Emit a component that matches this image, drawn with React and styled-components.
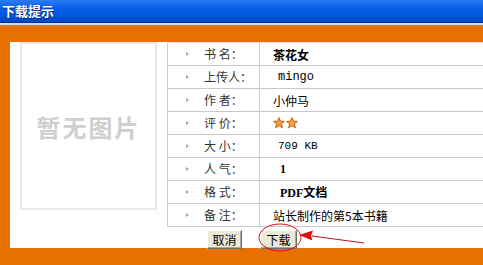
import React from 'react';
import styled, { createGlobalStyle } from 'styled-components';

const GlobalStyle = createGlobalStyle`
  html, body {
    margin: 0;
    padding: 0;
    background: #e87000;
  }
  body {
    font-family: "Noto Sans CJK SC", "Liberation Sans", sans-serif;
    font-size: 12px;
    color: #000;
  }
`;

const rows = [
  { label: '书 名：', value: '茶花女', kind: 'bold' },
  { label: '上传人：', value: 'mingo', kind: 'mono' },
  { label: '作 者：', value: '小仲马' },
  { label: '评 价：', stars: 2 },
  { label: '大 小：', value: '709 KB', kind: 'size' },
  { label: '人 气：', value: '1', kind: 'num' },
  { label: '格 式：', value: 'PDF文档', kind: 'num' },
  { label: '备 注：', value: '站长制作的第5本书籍' },
];

const Page = styled.div`
  position: relative;
  width: 483px;
  height: 265px;
  overflow: hidden;
  background: #e87000;
`;

const TitleBar = styled.div`
  height: 22px;
  background: linear-gradient(#2b7cf2 0%, #0a5fe8 35%, #0055dd 75%, #0044c4 100%);
  border-bottom: 1px solid #00309a;
  color: #fff;
  font-weight: 700;
  font-size: 13px;
  line-height: 22px;
  padding-left: 2px;
  text-shadow: 1px 1px 0 #0a2a80;
`;

const Rule = styled.div`
  height: 2px;
  background: #dcdcd4;
  border-bottom: 1px solid #a88860;
`;

const Body = styled.div`
  padding: 16px 0 0 10px;
`;

const Panel = styled.div`
  display: flex;
  background: #fff;
  width: 520px;
  height: 206px;
  padding-left: 10px;
  box-sizing: border-box;
`;

const Cover = styled.div`
  width: 137px;
  height: 168px;
  box-sizing: border-box;
  border: 2px solid #e8e8e8;
  display: flex;
  align-items: center;
  justify-content: center;
  color: #cfcfcf;
  font-size: 24px;
  font-weight: 700;
  letter-spacing: 2px;
  font-family: "Noto Sans CJK SC", sans-serif;
  flex-shrink: 0;
`;

const Info = styled.div`
  margin-left: 10px;
  display: flex;
  flex-direction: column;
  flex: 1;
`;

const Table = styled.div`
  border-left: 1px solid #cfcfcf;
  border-top: 1px solid #e4e4e4;
`;

const Row = styled.div`
  display: grid;
  grid-template-columns: 36px 56px 1fr;
  height: 23px;
  box-sizing: border-box;
  border-bottom: 1px solid #c8c8c8;
  align-items: center;
`;

const Bullet = styled.div`
  justify-self: center;
  margin-left: 2px;
  width: 0;
  height: 0;
  border-top: 2px solid transparent;
  border-bottom: 2px solid transparent;
  border-left: 3px solid #8fb0a8;
`;

const Label = styled.div`
  color: #333;
  font-size: 12px;
  white-space: pre;
  height: 100%;
  line-height: 22px;
  border-right: 1px solid #cfcfcf;
`;

const Value = styled.div`
  padding-left: ${(p) => (p.$kind === 'mono' || p.$kind === 'size' ? '18px' : p.$kind === 'num' ? '20px' : '13px')};
  font-size: ${(p) => (p.$kind === 'mono' ? '12px' : p.$kind === 'size' ? '11px' : '12px')};
  font-weight: ${(p) => (p.$kind === 'bold' || p.$kind === 'num' ? 700 : 400)};
  font-family: ${(p) =>
    p.$kind === 'mono' || p.$kind === 'size'
      ? '"Liberation Mono", monospace'
      : p.$kind === 'num'
      ? '"Liberation Serif", "Noto Sans CJK SC", serif'
      : '"Noto Sans CJK SC", sans-serif'};
  white-space: nowrap;
  display: flex;
  align-items: center;
  gap: 1px;
`;

const Buttons = styled.div`
  display: flex;
  gap: 18px;
  padding-left: 40px;
  margin-top: 3px;
`;

const Button = styled.button`
  width: ${(p) => p.$w || 36}px;
  height: 19px;
  padding: 0;
  background: #ece9d8;
  border: 1px solid;
  border-color: #fff #716f64 #716f64 #fff;
  box-shadow: inset -1px -1px 0 #aca899;
  font-family: "Noto Sans CJK SC", sans-serif;
  font-size: 12px;
  line-height: 17px;
  color: #000;
`;

const Footer = styled.div`
  padding: 13px 0 0 90px;
  color: #2a1a00;
  font-size: 13px;
  font-weight: 700;
  white-space: nowrap;
`;

const Overlay = styled.svg`
  position: absolute;
  left: 0;
  top: 0;
  pointer-events: none;
`;

const Star = () => (
  <svg width="12" height="12" viewBox="0 0 12 12">
    <path
      d="M6 0.6 L7.5 4.2 L11.4 4.4 L8.4 6.9 L9.4 10.8 L6 8.6 L2.6 10.8 L3.6 6.9 L0.6 4.4 L4.5 4.2 Z"
      fill="#f7a13a"
      stroke="#c0500a"
      strokeWidth="0.9"
    />
  </svg>
);

export default function App() {
  return (
    <>
      <GlobalStyle />
      <Page>
        <TitleBar>下载提示</TitleBar>
        <Rule />
        <Body>
          <Panel>
            <Cover>暂无图片</Cover>
            <Info>
              <Table>
                {rows.map((r) => (
                  <Row key={r.label}>
                    <Bullet />
                    <Label>{r.label}</Label>
                    <Value $kind={r.kind}>
                      {r.stars
                        ? Array.from({ length: r.stars }).map((_, i) => <Star key={i} />)
                        : r.value}
                    </Value>
                  </Row>
                ))}
              </Table>
              <Buttons>
                <Button $w={35}>取消</Button>
                <Button $w={37}>下载</Button>
              </Buttons>
            </Info>
          </Panel>
          <Footer>Copyright © 2004-2008 电子书下载 All Rights Reserved</Footer>
        </Body>
        <Overlay width="483" height="265" viewBox="0 0 483 265">
          <ellipse cx="280" cy="237.5" rx="21" ry="13.5" fill="none" stroke="#d81010" strokeWidth="1" />
          <path d="M364 243 L312 236" stroke="#c01018" strokeWidth="1" fill="none" />
          <path d="M299 235 L313 230.5 L311 236 L312.5 240.5 Z" fill="#e01010" />
        </Overlay>
      </Page>
    </>
  );
}
